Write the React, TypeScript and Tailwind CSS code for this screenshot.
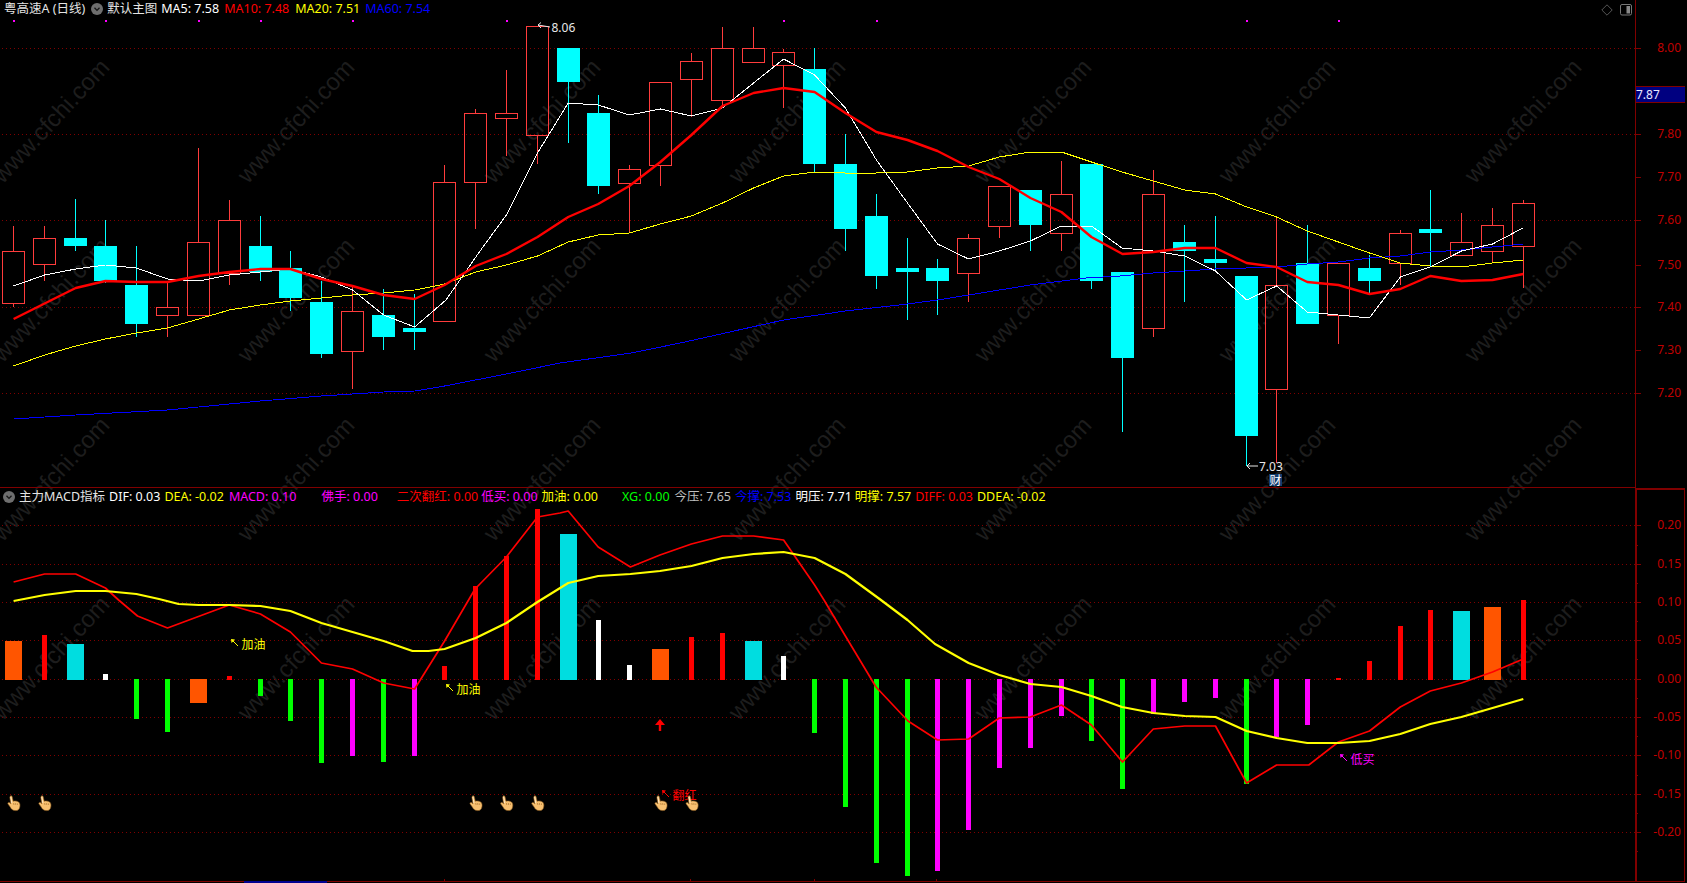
// 粤高速A daily chart with the MACD sub-pane
type Candle = [number, number, number, number, number, "r" | "c"];
type Bar = [number, number, string, boolean?];
type Pt = [number, number];

const UP = "#ff3c3c";
const DOWN = "#00ffff";
const GRID = "#800000";
const AXIS_TEXT = "#c00000";
const ORANGE = "#ff5500";
const TEAL = "#00dde0";
const GREEN = "#00ff00";
const MAGENTA = "#ff00ff";
const RED = "#ff0000";
const WHITE = "#ffffff";

const FONT = '"Noto Sans", "Noto Sans CJK SC", sans-serif';

// x, high, top, bottom, low
const candles: Candle[] = [
  [13.5, 226, 251, 303, 307, "r"],
  [44.5, 226, 238, 264, 281, "r"],
  [75.5, 199, 238, 246, 251, "c"],
  [105.5, 220, 246, 281, 283, "c"],
  [136.5, 246, 285, 324, 337, "c"],
  [167.5, 283, 307, 315, 337, "r"],
  [198.5, 148, 242, 315, 315, "r"],
  [229.5, 200, 220, 273, 285, "r"],
  [260.5, 216, 246, 272, 281, "c"],
  [290.5, 251, 268, 298, 311, "c"],
  [321.5, 281, 302, 354, 358, "c"],
  [352.5, 285, 311, 351, 389, "r"],
  [383.5, 289, 315, 337, 350, "c"],
  [414.5, 294, 328, 332, 350, "c"],
  [444.5, 165, 182, 321, 321, "r"],
  [475.5, 109, 113, 182, 229, "r"],
  [506.5, 70, 113, 118, 156, "r"],
  [537.5, 26, 26, 135, 164, "r"],
  [568.5, 48, 48, 82, 143, "c"],
  [598.5, 95, 113, 186, 194, "c"],
  [629.5, 165, 169, 183, 233, "r"],
  [660.5, 82, 82, 165, 186, "r"],
  [691.5, 53, 61, 79, 117, "r"],
  [722.5, 27, 48, 100, 108, "r"],
  [753.5, 27, 48, 62, 62, "r"],
  [783.5, 49, 52, 65, 108, "r"],
  [814.5, 48, 69, 164, 172, "c"],
  [845.5, 134, 164, 229, 251, "c"],
  [876.5, 194, 216, 276, 289, "c"],
  [907.5, 238, 268, 272, 320, "c"],
  [937.5, 259, 268, 281, 315, "c"],
  [968.5, 234, 238, 273, 302, "r"],
  [999.5, 186, 186, 226, 238, "r"],
  [1030.5, 190, 190, 225, 251, "c"],
  [1061.5, 161, 194, 233, 251, "r"],
  [1091.5, 164, 164, 281, 289, "c"],
  [1122.5, 272, 272, 358, 432, "c"],
  [1153.5, 170, 194, 328, 337, "r"],
  [1184.5, 225, 242, 251, 302, "c"],
  [1215.5, 216, 259, 263, 272, "c"],
  [1246.5, 276, 276, 436, 466, "c"],
  [1276.5, 217, 285, 389, 463, "r"],
  [1307.5, 225, 263, 324, 324, "c"],
  [1338.5, 263, 263, 315, 344, "r"],
  [1369.5, 255, 268, 281, 293, "c"],
  [1400.5, 230, 233, 263, 285, "r"],
  [1430.5, 190, 229, 233, 266, "c"],
  [1461.5, 213, 242, 255, 255, "r"],
  [1492.5, 208, 225, 251, 263, "r"],
  [1523.5, 200, 203, 246, 288, "r"],
];

const ma5: Pt[] = [[13.6,286],[44.6,275],[75.7,269],[105.4,265],[136.4,268],[167.5,279],[198.6,281],[229.3,275],[260.4,272],[290.4,269],[321.4,277],[352.5,290],[383.6,315],[414.6,327],[446,300],[478.6,253],[506.4,215],[537.5,153],[568.2,103],[598.2,105],[629.3,115],[660.4,109],[691.4,116],[722.5,108],[753.6,83],[783.6,59],[814.6,75],[845.4,108],[876.4,160],[907.5,203],[937.5,244],[968.6,259],[999.3,251],[1030.4,241],[1061.4,226],[1091.4,226],[1122,248],[1153.3,251],[1184.7,256],[1215.5,271],[1246.6,300],[1276.6,286],[1307.3,312],[1338.4,315],[1369.5,318],[1400.3,277],[1430.3,267],[1461.4,251],[1492.5,244],[1523,228]];
const ma10: Pt[] = [[13.6,319],[53.6,299],[75.7,288],[105.4,281],[136.4,282],[167.5,282],[198.6,276],[229.3,272],[260.4,269],[290.4,269],[321.4,279],[352.5,286],[383.6,295],[414.6,299],[444.6,285],[475.7,266],[506.4,254],[537.5,237],[568.2,217],[598.2,204],[629.3,186],[660.4,162],[691.4,135],[722.5,106],[753.6,93],[783.6,88],[814.6,92],[845.4,113],[876.4,132],[907.5,140],[937.5,151],[968.6,167],[999.3,179],[1030.4,198],[1061.4,212],[1091.4,237],[1122.5,254],[1153.3,252],[1184.7,248],[1215.5,248],[1246.6,263],[1276.6,267],[1307.3,282],[1338.4,285],[1369.5,294],[1400.3,289],[1430.3,276],[1461.4,281],[1492.5,280],[1523.3,274]];
const ma20: Pt[] = [[13.6,366],[44.6,355],[75.7,346],[105.4,339],[136.4,333],[167.5,328],[198.6,319],[229.3,310],[260.4,305],[290.4,301],[321.4,298],[352.5,295],[383.6,293],[414.6,290],[444.6,284],[475.7,272],[506.4,265],[537.5,256],[568.2,242],[598.2,235],[629.3,233],[660.4,224],[691.4,216],[722.5,203],[753.6,188],[783.6,176],[814.6,172],[845.4,173],[876.4,173],[907.5,172],[937.5,168],[968.6,166],[999.3,157],[1030.4,152],[1061.4,152],[1091.4,162],[1122,172],[1153.3,181],[1184.7,190],[1215.5,194],[1246.6,207],[1276.6,217],[1307.3,231],[1338.4,242],[1369.5,253],[1400.3,263],[1430.3,266],[1461.4,267],[1492.5,263],[1523.3,260]];
const ma60: Pt[] = [[13.6,419],[75.7,415],[167.5,410],[198.6,407],[260.4,401],[321.4,396],[383.6,392],[414.6,391],[444.6,386],[506.4,374],[560,363],[631.4,353],[685,342],[738.6,330],[783.6,320],[845.4,311],[907.5,304],[937.5,300],[968.6,295],[1030.4,285],[1086,278],[1120,276],[1153.3,273],[1184.7,271],[1215.5,269],[1276.6,267],[1307.3,264],[1338.4,262],[1369.5,258],[1400.3,256],[1430.3,252],[1461.4,250],[1492.5,247],[1523.3,244]];

// x, end of the bar away from the zero line, colour, wide
const bars: Bar[] = [
  [13.5,641,ORANGE,true],[44.5,635,RED],[75.5,644,TEAL,true],[105.5,674,WHITE],[136.5,718,GREEN],
  [167.5,731,GREEN],[198.5,702,ORANGE,true],[229.5,676,RED],[260.5,695,GREEN],[290.5,720,GREEN],
  [321.5,762,GREEN],[352.5,755,MAGENTA],[383.5,761,GREEN],[414.5,755,MAGENTA],[444.5,666,RED],
  [475.5,586,RED],[506.5,556,RED],[537.5,509,RED],[568.5,534,TEAL,true],[598.5,620,WHITE],
  [629.5,665,WHITE],[660.5,649,ORANGE,true],[691.5,637,RED],[722.5,633,RED],[753.5,641,TEAL,true],
  [783.5,656,WHITE],[814.5,732,GREEN],[845.5,806,GREEN],[876.5,862,GREEN],[907.5,875,GREEN],
  [937.5,870,MAGENTA],[968.5,829,MAGENTA],[999.5,767,MAGENTA],[1030.5,747,MAGENTA],[1061.5,715,MAGENTA],
  [1091.5,740,GREEN],[1122.5,788,GREEN],[1153.5,713,MAGENTA],[1184.5,701,MAGENTA],[1215.5,697,MAGENTA],
  [1246.5,783,GREEN],[1276.5,736,MAGENTA],[1307.5,724,MAGENTA],[1338.5,678,RED],[1369.5,661,RED],
  [1400.5,626,RED],[1430.5,610,RED],[1461.5,611,TEAL,true],[1492.5,607,ORANGE,true],[1523.5,600,RED],
];

const diff: Pt[] = [[13.6,582],[44.6,574],[75.7,574],[105.4,588],[118.6,600],[137.5,616],[167.5,628],[229.3,605],[260.4,614],[290.4,632],[321.4,663],[352.5,669],[383.6,683],[414.6,689],[444.6,641],[475,589],[506.4,557],[537.5,517],[560,513],[568.2,511],[598.2,547],[630.4,567],[660,555],[691.4,544],[722.5,536],[753.6,536],[783.6,540],[814.6,585],[824,600],[845.4,636],[876,687],[908,721],[937.5,740],[968.6,739],[999.3,718],[1030.4,717],[1061.4,705],[1091.4,725],[1122.5,762],[1153.3,729],[1184.7,726],[1215.5,726],[1246.6,783],[1276.6,765],[1308.8,765],[1338.4,742],[1369.5,731],[1400.3,707],[1430.3,691],[1461.4,683],[1492.5,672],[1523.3,659]];
const dea: Pt[] = [[13.6,601],[44.6,595],[75.7,591],[105.4,591],[136.4,594],[159,599],[178.6,604],[198.6,605],[229.3,605],[260.4,606],[290.4,611],[321.4,623],[352.5,632],[383.6,641],[412.5,651],[428.6,651],[444.6,649],[475.7,638],[506.4,623],[537.5,602],[568.2,583],[598.2,576],[630.4,574],[660,571],[691.4,566],[722.5,558],[753.6,554],[783.6,552],[814.6,558],[845.4,574],[879.6,599],[907.5,620],[935,644],[968.6,663],[999.3,675],[1030.4,684],[1061.4,687],[1091.4,696],[1122,707],[1153.3,713],[1184.7,716],[1215.5,717],[1246.6,731],[1276.6,738],[1307.3,743],[1338.4,743],[1369.5,741],[1400.3,734],[1430.3,724],[1461.4,717],[1492.5,708],[1523.3,699]];

const signalDots = [13, 105, 198, 260, 352, 506, 783, 876, 1246, 1338];
const hands = [13.6, 44.6, 475.7, 506.4, 537.5, 660.7, 691.8];
const mainGrid = [48, 134, 220, 307, 393];
const subGrid = [525, 564, 602, 640, 679, 717, 755, 794, 832];

const mainTicks: [string, number][] = [["8.00",48],["7.80",134],["7.70",177],["7.60",220],["7.50",265],["7.40",307],["7.30",350],["7.20",393]];
const subTicks: [string, number][] = [["0.20",525],["0.15",564],["0.10",602],["0.05",640],["0.00",679],["-0.05",717],["-0.10",755],["-0.15",794],["-0.20",832]];
const subMinor = [545, 583, 621, 659, 698, 736, 775, 813, 851];

const wmX = [51, 296, 542, 787, 1033, 1277, 1523];
const wmY = [121, 300, 479, 658];

function toPoints(pts: Pt[]) {
  return pts.map((p) => p.join(",")).join(" ");
}

function Watermarks() {
  return (
    <g fill="#1d1d1d" fontFamily='"Liberation Sans", sans-serif' fontSize={24} textAnchor="middle">
      {wmY.flatMap((y) =>
        wmX.map((x) => (
          <text key={`${x}-${y}`} x={x} y={y + 8} transform={`rotate(-47 ${x} ${y})`}>
            www.cfchi.com
          </text>
        )),
      )}
    </g>
  );
}

function Line({ pts, color, width = 1 }: { pts: Pt[]; color: string; width?: number }) {
  return <polyline points={toPoints(pts)} fill="none" stroke={color} strokeWidth={width} strokeLinejoin="round" />;
}

function CandleMark({ c }: { c: Candle }) {
  const [x, high, top, bottom, low, kind] = c;
  if (kind === "c") {
    return (
      <g shapeRendering="crispEdges">
        <line x1={x} x2={x} y1={high} y2={low} stroke={DOWN} />
        <rect x={x - 11.5} y={top} width={23} height={bottom - top} fill={DOWN} />
      </g>
    );
  }
  return (
    <g shapeRendering="crispEdges">
      <line x1={x} x2={x} y1={high} y2={top} stroke={UP} />
      <line x1={x} x2={x} y1={bottom} y2={low} stroke={UP} />
      <rect x={x - 11} y={top + 0.5} width={22} height={bottom - top} fill="none" stroke={UP} />
    </g>
  );
}

function HandIcon({ x }: { x: number }) {
  return (
    <g transform={`translate(${x - 7} 795)`}>
      <path
        d="M3.6 1.2 C4.4 .4 5.4 .8 5.6 1.8 L6.6 6.2 C8.4 5.6 10.6 6 12 7 C13.4 8 13.6 10 13.2 12 C12.8 14.6 11 15.8 8.6 15.6 C6 15.4 4.6 14 3.6 12 L1.4 9 C.8 8 1.8 7 2.8 7.6 L4.2 8.8 L3.2 2.6 Z"
        fill="#f8c070"
        stroke="#8a5a20"
        strokeWidth={0.6}
      />
      <path d="M7 8 L7.4 10 M9 8 L9.2 10 M11 8.4 L11 10" stroke="#a06a28" strokeWidth={0.6} />
      <path d="M4.2 1.8 L5.2 8" stroke="#fff0d8" strokeWidth={0.8} />
    </g>
  );
}

function Note({ x, y, label, color }: { x: number; y: number; label: string; color: string }) {
  return (
    <g>
      <path d={`M${x} ${y - 6} L${x + 6} ${y}`} stroke={color} />
      <path d={`M${x - 1} ${y - 7} L${x + 3} ${y - 6.5} L${x - 0.5} ${y - 3} Z`} fill={color} />
      <text x={x + 9.5} y={y + 2.5} fill={color} fontSize={12} fontFamily={FONT}>
        {label}
      </text>
    </g>
  );
}

function Legend({ children, className }: { children: React.ReactNode; className: string }) {
  return (
    <div className={`pointer-events-none absolute left-0 flex items-center whitespace-nowrap text-[12.5px] leading-none ${className}`}>
      {children}
    </div>
  );
}

function DownCircle() {
  return (
    <span className="flex h-3 w-3 items-center justify-center rounded-full bg-[#6e6e6e]">
      <svg width="8" height="8" viewBox="0 0 8 8">
        <path d="M1.5 2.8 L4 5.4 L6.5 2.8" fill="none" stroke="#141414" strokeWidth="1.3" />
      </svg>
    </span>
  );
}

function MainPane() {
  return (
    <div className="relative h-[488px] w-[1635px] shrink-0 border-b border-[#800000]">
      <svg className="block h-[487px] w-[1635px]" viewBox="0 0 1635 487">
        <Watermarks />
        <g stroke={GRID} strokeDasharray="1 3" shapeRendering="crispEdges">
          {mainGrid.map((y) => (
            <line key={y} x1={2} x2={1635} y1={y + 0.5} y2={y + 0.5} />
          ))}
        </g>
        {signalDots.map((x) => (
          <rect key={x} x={x} y={20} width={2} height={2} fill={MAGENTA} />
        ))}
        {candles.map((c) => (
          <CandleMark key={c[0]} c={c} />
        ))}
        <g shapeRendering="crispEdges">
          <Line pts={ma60} color="#0000ff" />
          <Line pts={ma20} color="#ffff00" />
          <Line pts={ma5} color="#ffffff" />
        </g>
        <Line pts={ma10} color="#ff0000" width={2.4} />
        <g fontFamily={FONT} fontSize={12} fill="#e8e8e8">
          <path d="M538 25 L550 27 M538 25 L541 22.5 M538 25 L541 28" stroke="#e8e8e8" fill="none" />
          <text x={551.5} y={31.5}>8.06</text>
          <path d="M1247 466 L1258 466 M1247 466 L1250 463 M1247 466 L1250 469" stroke="#e8e8e8" fill="none" />
          <text x={1259} y={470.5}>7.03</text>
          <rect x={1269} y={474} width={13} height={12} fill="#123c6e" />
          <text x={1269.5} y={484.5} fontSize={12} fill="#ffffff">财</text>
        </g>
      </svg>
      <Legend className="top-[3px] pl-1">
        <span className="text-[#e4e4e4]">粤高速A (日线)</span>
        <span className="ml-[6px]"><DownCircle /></span>
        <span className="ml-[4px] text-[#e4e4e4]">默认主图</span>
        <span className="ml-[4px] text-white">MA5: 7.58</span>
        <span className="ml-[5px] text-[#ff0000]">MA10: 7.48</span>
        <span className="ml-[6px] text-[#ffff00]">MA20: 7.51</span>
        <span className="ml-[5px] text-[#0000ff]">MA60: 7.54</span>
      </Legend>
      <div className="absolute left-[1601px] top-[4px] flex items-center gap-[7px]">
        <svg width="12" height="12" viewBox="0 0 12 12">
          <path d="M6 .8 L11.2 6 L6 11.2 L.8 6 Z" fill="none" stroke="#555555" />
        </svg>
        <svg width="12" height="12" viewBox="0 0 12 12">
          <rect x=".5" y=".5" width="11" height="10.5" rx="1.5" fill="none" stroke="#777777" />
          <rect x="6.5" y="2" width="3.5" height="7.5" fill="#888888" />
        </svg>
      </div>
    </div>
  );
}

function SubPane() {
  return (
    <div className="relative h-[395px] w-[1635px] shrink-0">
      <svg className="block h-[395px] w-[1635px]" viewBox="0 488 1635 395">
        <Watermarks />
        <g stroke={GRID} strokeDasharray="1 3" shapeRendering="crispEdges">
          {subGrid.map((y) => (
            <line key={y} x1={2} x2={1635} y1={y + 0.5} y2={y + 0.5} />
          ))}
        </g>
        <g shapeRendering="crispEdges">
          {bars.map(([x, end, color, wide]) => {
            const w = wide ? 17 : 5;
            const y = Math.min(end, 679);
            return <rect key={x} x={x - w / 2} y={y} width={w} height={Math.abs(end - 679) + 1} fill={color} />;
          })}
        </g>
        <Line pts={diff} color="#ff0000" width={1.7} />
        <Line pts={dea} color="#ffff00" width={2.2} />
        <Note x={232} y={646} label="加油" color="#ffff00" />
        <Note x={447} y={691} label="加油" color="#ffff00" />
        <Note x={663} y={797} label="翻红" color="#ff0000" />
        <Note x={1341} y={761} label="低买" color="#ff00ff" />
        <path d="M660 719 L665 725 L661.2 725 L661.2 731 L658.8 731 L658.8 725 L655 725 Z" fill="#ff0000" />
        {hands.map((x) => (
          <HandIcon key={x} x={x} />
        ))}
        <g shapeRendering="crispEdges">
          <line x1={0} x2={1635} y1={881.5} y2={881.5} stroke={GRID} />
          <line x1={244} x2={327} y1={881.5} y2={881.5} stroke="#000090" strokeWidth={2} />
          {[444, 690, 814, 936].map((x) => (
            <line key={x} x1={x} x2={x} y1={879} y2={882} stroke={GRID} />
          ))}
        </g>
      </svg>
      <Legend className="top-[3px] pl-[3px]">
        <DownCircle />
        <span className="ml-[4px] text-[#e4e4e4]">主力MACD指标</span>
        <span className="ml-[4px] text-white">DIF: 0.03</span>
        <span className="ml-[4px] text-[#ffff00]">DEA: -0.02</span>
        <span className="ml-[5px] text-[#ff00ff]">MACD: 0.10</span>
        <span className="ml-[25px] text-[#ff00ff]">佛手: 0.00</span>
        <span className="ml-[19px] text-[#ff0000]">二次翻红: 0.00</span>
        <span className="ml-[3px] text-[#ff00ff]">低买: 0.00</span>
        <span className="ml-[4px] text-[#ffff00]">加油: 0.00</span>
        <span className="ml-[24px] text-[#00ff00]">XG: 0.00</span>
        <span className="ml-[5px] text-[#c0c0c0]">今压: 7.65</span>
        <span className="ml-[4px] text-[#0000ff]">今撑: 7.53</span>
        <span className="ml-[4px] text-white">明压: 7.71</span>
        <span className="ml-[3px] text-[#ffff00]">明撑: 7.57</span>
        <span className="ml-[4px] text-[#ff0000]">DIFF: 0.03</span>
        <span className="ml-[4px] text-[#ffff00]">DDEA: -0.02</span>
      </Legend>
    </div>
  );
}

function Axis() {
  return (
    <svg className="block h-[883px] w-[52px] shrink-0" viewBox="1635 0 52 883">
      <g shapeRendering="crispEdges">
        <line x1={1635} x2={1635} y1={0} y2={488} stroke={GRID} />
        <rect x={1635} y={488} width={2} height={394} fill={GRID} />
        <rect x={1635} y={488} width={50} height={2} fill={GRID} />
        <rect x={1684} y={488} width={1} height={394} fill={GRID} />
        <line x1={1635} x2={1685} y1={881.5} y2={881.5} stroke={GRID} />
        {mainTicks.map(([, y]) => (
          <line key={y} x1={1635} x2={1641} y1={y + 0.5} y2={y + 0.5} stroke={GRID} />
        ))}
        {subTicks.map(([, y]) => (
          <line key={y} x1={1635} x2={1641} y1={y + 0.5} y2={y + 0.5} stroke={GRID} />
        ))}
        {subMinor.map((y) => (
          <line key={y} x1={1635} x2={1638} y1={y + 0.5} y2={y + 0.5} stroke={GRID} />
        ))}
        <rect x={1636} y={87} width={49} height={15} fill="#000080" />
        <line x1={1635} x2={1685} y1={86.5} y2={86.5} stroke={GRID} />
        <line x1={1635} x2={1685} y1={102.5} y2={102.5} stroke={GRID} />
      </g>
      <g fontFamily={FONT} fontSize={12} fill={AXIS_TEXT} textAnchor="end">
        {[...mainTicks, ...subTicks].map(([label, y]) => (
          <text key={label} x={1681} y={y + 4}>
            {label}
          </text>
        ))}
      </g>
      <text x={1636} y={99} fontFamily={FONT} fontSize={12} fill="#e8e8ff">7.87</text>
    </svg>
  );
}

export default function App() {
  return (
    <div className="flex h-[883px] w-[1687px] overflow-hidden bg-black" style={{ fontFamily: FONT }}>
      <div className="flex w-[1635px] shrink-0 flex-col">
        <MainPane />
        <SubPane />
      </div>
      <Axis />
    </div>
  );
}
